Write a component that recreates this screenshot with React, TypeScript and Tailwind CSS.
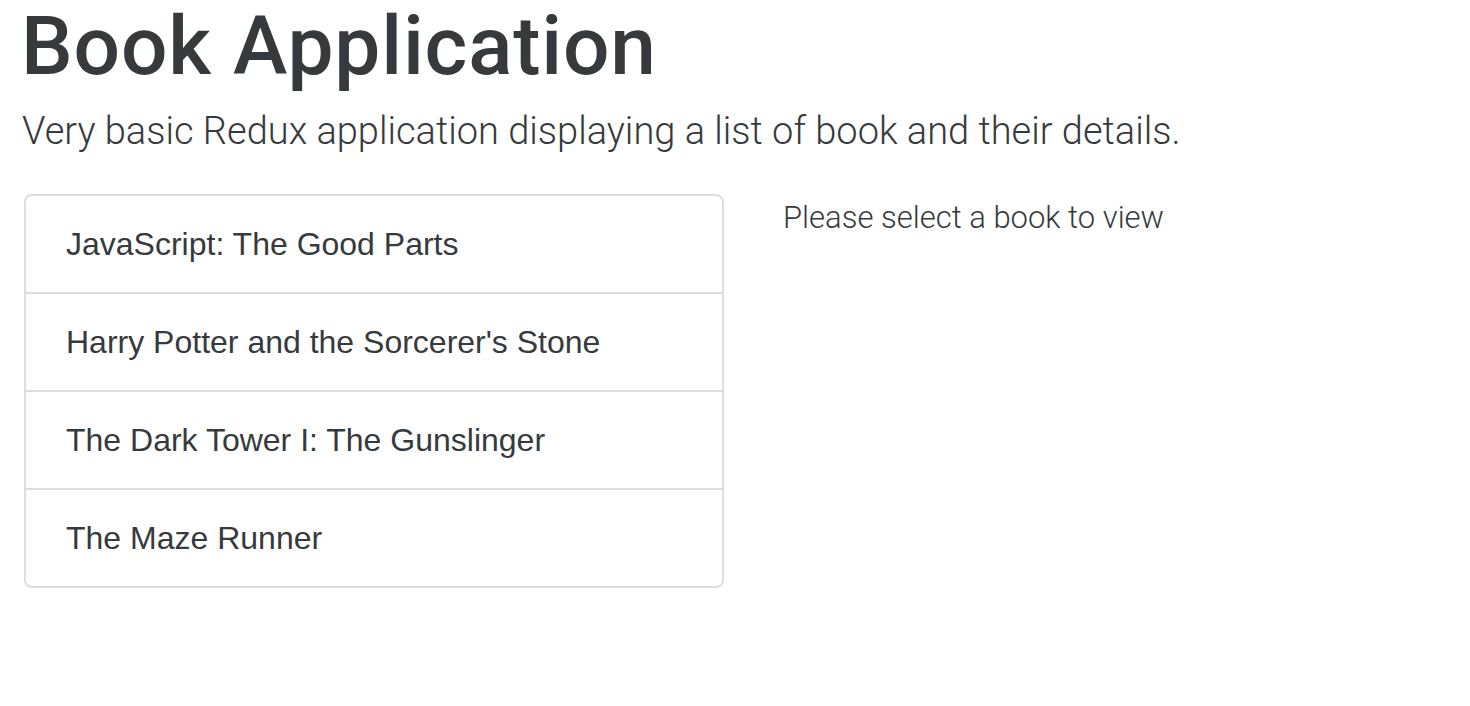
const books = [
  "JavaScript: The Good Parts",
  "Harry Potter and the Sorcerer's Stone",
  "The Dark Tower I: The Gunslinger",
  "The Maze Runner",
];

export default function App() {
  return (
    <div className="min-h-screen bg-white px-[24px] text-[#373a3c] font-['Liberation_Sans',Arial,sans-serif]">
      <h1 className="-ml-[3px] font-['Roboto',sans-serif] text-[82px] font-medium leading-[92px] tracking-[0.8px]">
        Book Application
      </h1>
      <p className="-ml-[2px] mt-[9px] font-['Roboto',sans-serif] text-[38px] font-light leading-[60px]">
        Very basic Redux application displaying a list of book and their details.
      </p>
      <div className="mt-[33px] flex">
        <ul className="w-[700px] rounded-[8px] border-2 border-[#ddd]">
          {books.map((b, i) => (
            <li
              key={b}
              className={`px-[40px] py-[24px] text-[32px] leading-[48px] ${i > 0 ? "border-t-2 border-[#ddd]" : ""}`}
            >
              {b}
            </li>
          ))}
        </ul>
        <div className="ml-[59px] font-['Roboto',sans-serif] text-[31px] font-light leading-[48px]">
          Please select a book to view
        </div>
      </div>
    </div>
  );
}
